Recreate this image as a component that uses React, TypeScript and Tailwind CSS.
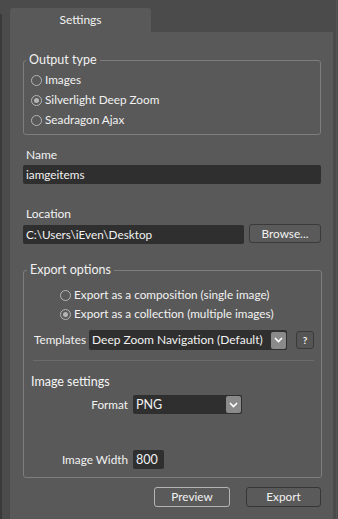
import React from "react";

const Radio = ({ checked, label }: { checked?: boolean; label: string }) => (
  <div className="flex items-center h-5 gap-[3px]">
    <span className="w-[11px] h-[11px] rounded-full border border-[#b5b5b5] flex items-center justify-center">
      {checked && <span className="w-[5px] h-[5px] rounded-full bg-[#b5b5b5]" />}
    </span>
    <span>{label}</span>
  </div>
);

const Chevron = () => (
  <span className="w-[15px] h-[17px] rounded-[2px] bg-[#8a8a8a] flex items-center justify-center">
    <svg width="9" height="6" viewBox="0 0 9 6">
      <polyline points="1,1 4.5,4.5 8,1" fill="none" stroke="#ffffff" strokeWidth="1.6" />
    </svg>
  </span>
);

const App = () => {
  return (
    <div className="w-[338px] h-[519px] bg-[#4b4b4b] flex font-['Lato',sans-serif] text-[11.75px] text-[#f2f2f2] leading-[16px] overflow-hidden whitespace-nowrap">
      <div className="w-[2px] bg-[#3a3a3a] mt-[14px]" />
      <div className="w-[8px]" />
      <div className="w-[323px] flex flex-col">
        {/* tab strip */}
        <div className="h-[32px] pt-[8px]">
          <div className="w-[141px] h-[24px] bg-[#595959] rounded-t-[3px] flex items-center justify-center text-[12px]">
            Settings
          </div>
        </div>
        {/* panel */}
        <div className="flex-1 bg-[#595959] pl-[13px] pr-[12px]">
          <fieldset className="mt-[20px] border border-[#7d7d7d] rounded-[3px] pb-[4px]">
            <legend className="ml-[2px] px-[3px] leading-[16px] text-[12.5px]">Output type</legend>
            <div className="pt-[2px] pl-[7px]">
              <Radio label="Images" />
              <Radio checked label="Silverlight Deep Zoom" />
              <Radio label="Seadragon Ajax" />
            </div>
          </fieldset>

          <div className="mt-[12px] ml-[3px] text-[12px]">Name</div>
          <div className="mt-[2px] h-[19px] bg-[#2f2f2f] rounded-[2px] flex items-center px-[3px]">iamgeitems</div>

          <div className="mt-[22px] ml-[3px] text-[12px]">Location</div>
          <div className="mt-[3px] flex gap-[5px]">
            <div className="w-[221px] h-[19px] bg-[#2f2f2f] rounded-[2px] flex items-center px-[3px]">
              C:\Users\iEven\Desktop
            </div>
            <div className="flex-1 h-[19px] -mt-[1px] border border-[#3a3a3a] rounded-[3px] bg-[#5a5a5a] flex items-center justify-center">
              Browse...
            </div>
          </div>

          <fieldset className="mt-[18px] border border-[#7d7d7d] rounded-[3px] pb-[8px]">
            <legend className="ml-[3px] px-[3px] leading-[16px] text-[12.5px]">Export options</legend>
            <div className="pl-[36px] pt-[7px]">
              <Radio label="Export as a composition (single image)" />
              <div className="-mt-[1px]">
                <Radio checked label="Export as a collection (multiple images)" />
              </div>
            </div>
            <div className="pl-[9px] pr-[7px]">
              <div className="mt-[6px] flex items-center h-[20px]">
                <span className="w-[56px] pl-[1px]">Templates</span>
                <div className="w-[198px] h-[20px] bg-[#2f2f2f] rounded-[2px] flex items-center justify-between pl-[3px] pr-[1px] text-[12px]">
                  <span>Deep Zoom Navigation (Default)</span>
                  <Chevron />
                </div>
                <div className="ml-[9px] w-[18px] h-[18px] border border-[#3a3a3a] rounded-[3px] bg-[#555555] flex items-center justify-center text-[10px] font-bold">
                  ?
                </div>
              </div>
              <div className="mt-[10px] h-px bg-[#6b6b6b]" />
              <div className="mt-[13px] -ml-[2px] text-[12.5px] text-[#f5f5f5]">Image settings</div>
              <div className="mt-[5px] flex items-center">
                <span className="w-[100px] text-right pr-[5px]">Format</span>
                <div className="w-[109px] h-[19px] bg-[#2f2f2f] rounded-[2px] flex items-center justify-between pl-[3px] pr-[1px] text-[12.5px]">
                  <span>PNG</span>
                  <Chevron />
                </div>
              </div>
              <div className="mt-[36px] flex items-center">
                <span className="w-[100px] text-right pr-[5px]">Image Width</span>
                <div className="w-[31px] h-[19px] bg-[#2f2f2f] rounded-[2px] flex items-center px-[3px] text-[12.5px]">800</div>
              </div>
            </div>
          </fieldset>

          <div className="mt-[9px] flex justify-end gap-[16px]">
            <div className="w-[76px] h-[20px] border border-[#b4b4b4] rounded-[3px] bg-[#5a5a5a] flex items-center justify-center">
              Preview
            </div>
            <div className="w-[75px] h-[20px] border border-[#363636] rounded-[3px] bg-[#5a5a5a] flex items-center justify-center">
              Export
            </div>
          </div>
        </div>
      </div>
      <div className="w-[5px] flex">
        <div className="w-[3px]" />
        <div className="w-px bg-[#555555]" />
      </div>
    </div>
  );
};

export default App;
